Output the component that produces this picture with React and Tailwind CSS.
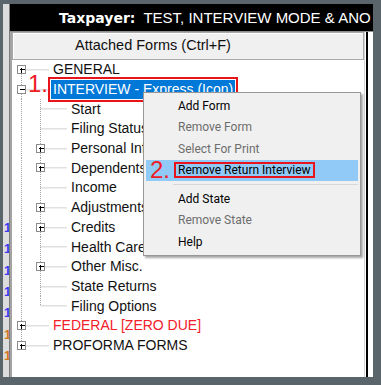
const tree = [
  { label: "GENERAL", depth: 0, box: "plus", first: true },
  { label: "INTERVIEW - Express (Icon)", depth: 0, box: "minus", selected: true },
  { label: "Start", depth: 1 },
  { label: "Filing Status", depth: 1 },
  { label: "Personal Information", depth: 1, box: "plus" },
  { label: "Dependents", depth: 1, box: "plus" },
  { label: "Income", depth: 1 },
  { label: "Adjustments", depth: 1, box: "plus" },
  { label: "Credits", depth: 1, box: "plus" },
  { label: "Health Care", depth: 1 },
  { label: "Other Misc.", depth: 1, box: "plus" },
  { label: "State Returns", depth: 1 },
  { label: "Filing Options", depth: 1, last: true },
  { label: "FEDERAL [ZERO DUE]", depth: 0, box: "plus", red: true },
  { label: "PROFORMA FORMS", depth: 0, box: "plus", last: true },
];

const menu = [
  { label: "Add Form" },
  { label: "Remove Form", disabled: true },
  { label: "Select For Print", disabled: true },
  { label: "Remove Return Interview", active: true },
  { sep: true },
  { label: "Add State" },
  { label: "Remove State", disabled: true },
  { label: "Help" },
];

const marks = ["#3a3af2", "#3a3af2", "#3a3af2", "#3a3af2", "#3a3af2", "#d4761c", "#d4761c"];

function Connector({ depth, box, first, last }) {
  const h = 19.7;
  const cy = 9.85;
  const w = depth === 0 ? 39 : 57;
  const bx = depth === 0 ? 9.5 : 28.5;
  const dot = { stroke: "#a3a3a3", strokeWidth: 1, strokeDasharray: "1 1" };
  return (
    <svg width={w} height={h} className="shrink-0 overflow-visible">
      {depth === 0 ? (
        <line x1="9.5" x2="9.5" y1={first ? cy : 0} y2={last ? cy : h} {...dot} />
      ) : (
        <>
          <line x1="9.5" x2="9.5" y1="0" y2={h} {...dot} />
          <line x1="28.5" x2="28.5" y1="0" y2={last ? cy : h} {...dot} />
        </>
      )}
      <line x1={bx} x2={depth === 0 ? 37 : 55} y1={cy} y2={cy} {...dot} />
      {box && (
        <g shapeRendering="crispEdges">
          <rect x={bx - 4} y={cy - 4} width="8" height="8" fill="#fff" stroke="#8c8c8c" />
          <line x1={bx - 2} x2={bx + 3} y1={cy} y2={cy} stroke="#000" />
          {box === "plus" && <line x1={bx} x2={bx} y1={cy - 2} y2={cy + 3} stroke="#000" />}
        </g>
      )}
    </svg>
  );
}

export default function App() {
  return (
    <div className="w-[381px] h-[385px] bg-[#5a656b] pt-[4px] pl-[3px] pr-[8px] pb-[8px] overflow-hidden font-['Liberation_Sans',Arial,sans-serif]">
      <div className="flex h-full">
        {/* strip of the window behind */}
        <div className="w-[7px] shrink-0 bg-[#dcdcdc] border-r border-[#7d7d7d] overflow-hidden flex flex-col pt-[213px]">
          {marks.map((c, i) => (
            <div key={i} className="h-[21.3px] flex items-center pl-[1px] text-[13px] font-bold leading-none" style={{ color: c }}>
              1
            </div>
          ))}
        </div>

        <div className="flex-1 flex flex-col min-w-0">
          <div className="h-[27px] shrink-0 bg-black text-white flex items-center pl-[49px] pt-[2px] whitespace-nowrap overflow-hidden">
            <span className="font-['DejaVu_Sans',sans-serif] font-bold text-[14px]">Taxpayer:</span>
            <span className="ml-[8px] text-[15px]">TEST, INTERVIEW MODE &amp; ANO</span>
          </div>

          <div className="flex-1 flex min-h-0 border-t border-[#8f8f8f]">
            <div className="relative flex-1 bg-white border-l-2 border-[#a3a3a3] border-r border-r-[#d4d4d4] flex flex-col">
              <div className="h-[28px] shrink-0 border border-[#a9a9a9] bg-[#f0f0f0] shadow-[inset_1px_1px_0_#ffffff] flex items-center pl-[62px] text-[14.5px] text-[#111]">
                Attached Forms (Ctrl+F)
              </div>

              <div className="flex flex-col text-[14px] text-[#111]">
                {tree.map((row) => (
                  <div key={row.label} className="relative flex h-[19.7px] items-center whitespace-nowrap">
                    <Connector depth={row.depth} box={row.box} first={row.first} last={row.last} />
                    <span
                      className={
                        "h-full flex items-center px-[2px] " +
                        (row.selected
                          ? "bg-[#0078d7] text-white outline-2 outline-[#e8141c] outline-offset-1"
                          : row.red
                          ? "text-[#f3202a]"
                          : "")
                      }
                    >
                      {row.label}
                    </span>
                    {row.selected && (
                      <span className="absolute left-[16px] top-[-8px] text-[24px] leading-[24px] text-[#ee1b24]">
                        1.
                      </span>
                    )}
                  </div>
                ))}
              </div>

              {/* context menu */}
              <div className="absolute left-[131px] top-[60px] w-[218px] border border-[#979797] bg-[#f0f0f0] p-[2px] shadow-[2px_2px_2px_rgba(0,0,0,0.35)] font-['Roboto',sans-serif] text-[12px]">
                {menu.map((item, i) =>
                  item.sep ? (
                    <div key={i} className="h-[7px] flex items-center pl-[27px]">
                      <div className="h-px flex-1 bg-[#d7d7d7]" />
                    </div>
                  ) : (
                    <div
                      key={i}
                      className={
                        "relative h-[21.5px] flex items-center pl-[32px] whitespace-nowrap " +
                        (item.active ? "bg-[#91c9f7] text-black" : item.disabled ? "text-[#6d6d6d]" : "text-black")
                      }
                    >
                      <span
                        className={
                          item.active
                            ? "leading-[12px] px-[2px] -mx-[2px] outline-2 outline-[#e8141c]"
                            : ""
                        }
                      >
                        {item.label}
                      </span>
                      {item.active && (
                        <span className="absolute left-[4px] top-[-1.5px] font-['Liberation_Sans',Arial,sans-serif] text-[24px] leading-[24px] text-[#ee1b24]">
                          2.
                        </span>
                      )}
                    </div>
                  )
                )}
              </div>
            </div>
            <div className="w-px bg-white" />
            <div className="w-[2px] bg-black" />
            <div className="w-[5px] bg-white" />
          </div>
        </div>
      </div>
    </div>
  );
}
